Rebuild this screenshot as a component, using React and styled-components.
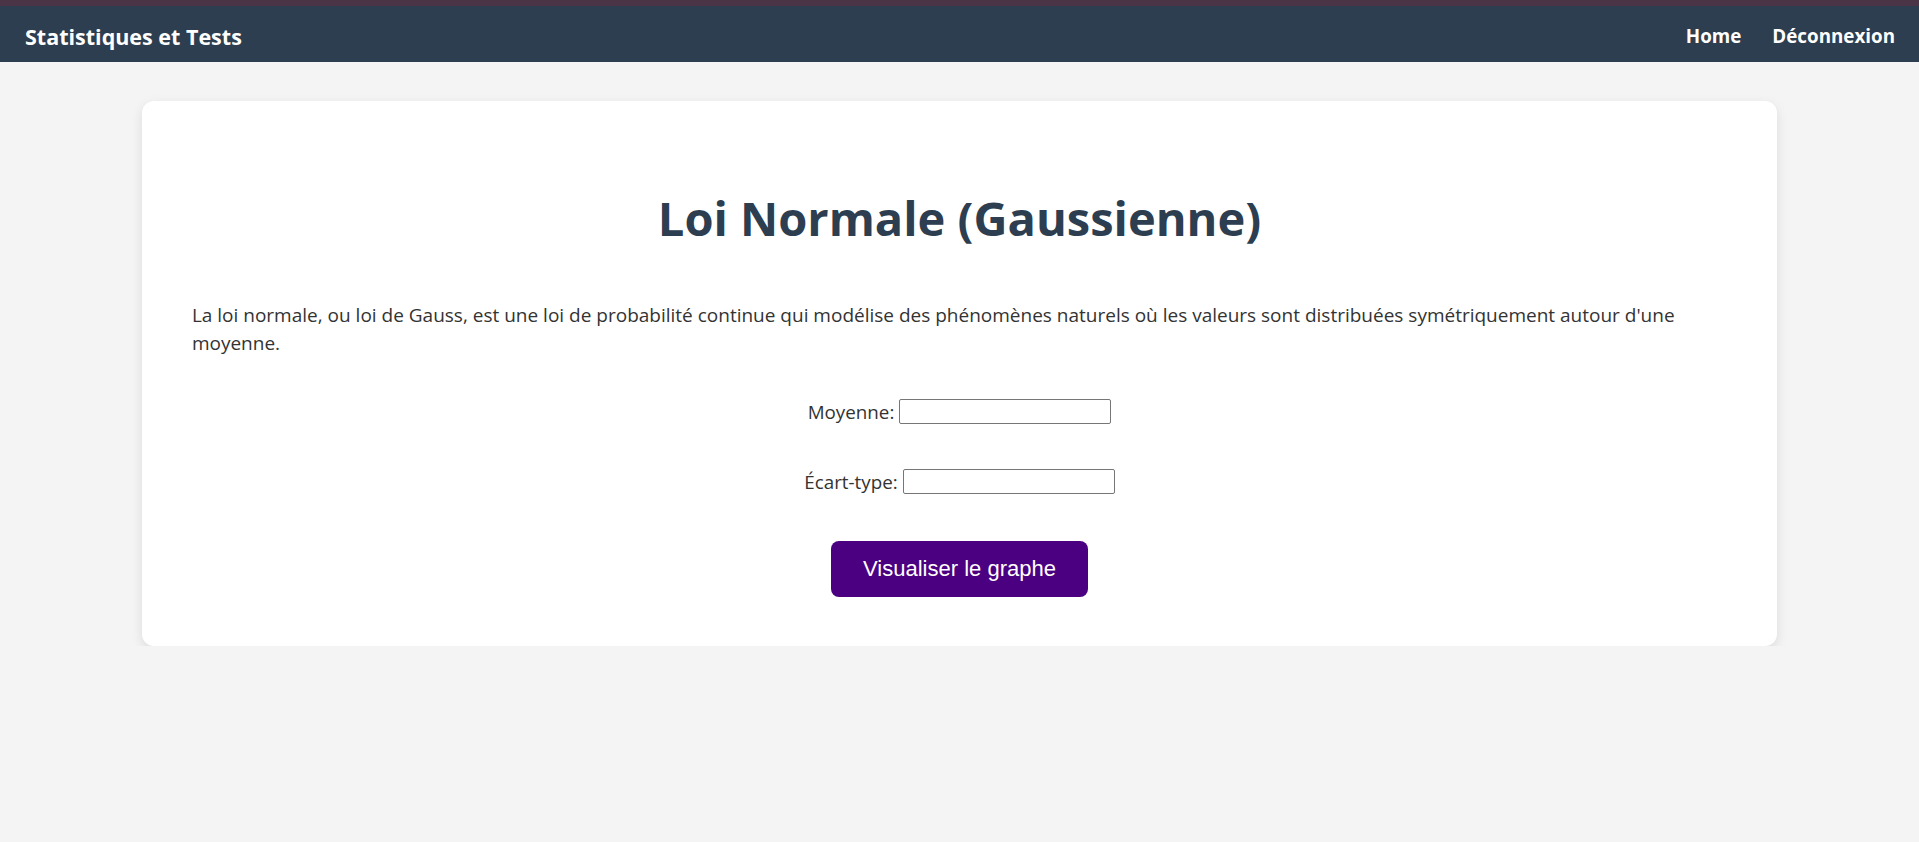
import React from "react";
import styled, { createGlobalStyle } from "styled-components";

const GlobalStyle = createGlobalStyle`
  html, body {
    margin: 0;
    padding: 0;
    background: #f4f4f4;
    font-family: "Open Sans", "Noto Sans", sans-serif;
    color: #333333;
  }
  * { box-sizing: border-box; }
`;

const TopStrip = styled.div`
  height: 6px;
  background: #4b3445;
`;

const NavBar = styled.nav`
  height: 56px;
  background: #2d3e50;
  display: flex;
  align-items: center;
  justify-content: space-between;
  padding: 4px 24px 0 25px;
`;

const Brand = styled.div`
  color: #ffffff;
  font-weight: 700;
  font-size: 21.5px;
`;

const NavLinks = styled.div`
  display: flex;
  align-items: center;
  gap: 31px;
`;

const NavLink = styled.a`
  color: #ffffff;
  font-weight: 700;
  font-size: 18.8px;
  text-decoration: none;
  cursor: pointer;
`;

const Card = styled.main`
  width: 80%;
  margin: 39px auto 0;
  box-sizing: content-box;
  padding: 50px 50px 49px;
  background: #ffffff;
  border-radius: 12px;
  box-shadow: 0 4px 12px rgba(0, 0, 0, 0.1);
`;

const Title = styled.h1`
  margin: 35px 0 51px;
  font-size: 47px;
  line-height: 64px;
  font-weight: 700;
  text-align: center;
  color: #2c3e50;
`;

const Description = styled.p`
  margin: 0;
  font-size: 19px;
  line-height: 28px;
  color: #333333;
`;

const Form = styled.form`
  display: flex;
  flex-direction: column;
  align-items: center;
  margin-top: 42px;
  gap: 45px;
`;

const Field = styled.div`
  display: flex;
  align-items: center;
  gap: 5px;
  height: 25px;
`;

const Label = styled.label`
  font-size: 18.8px;
  color: #333333;
  white-space: nowrap;
`;

const Input = styled.input`
  width: 212px;
  height: 25px;
  border: 1px solid #767676;
  border-radius: 2px;
  background: #ffffff;
  padding: 1px 2px;
  font-size: 16px;
`;

const SubmitButton = styled.button`
  margin-top: 2px;
  background: #4b0082;
  color: #ffffff;
  border: none;
  border-radius: 8px;
  padding: 15px 32px;
  font-family: "Liberation Sans", Arial, sans-serif;
  font-size: 22px;
  line-height: 26px;
  cursor: pointer;
`;

export default function App() {
  return (
    <>
      <GlobalStyle />
      <TopStrip />
      <NavBar>
        <Brand>Statistiques et Tests</Brand>
        <NavLinks>
          <NavLink>Home</NavLink>
          <NavLink>Déconnexion</NavLink>
        </NavLinks>
      </NavBar>
      <Card>
        <Title>Loi Normale (Gaussienne)</Title>
        <Description>
          La loi normale, ou loi de Gauss, est une loi de probabilité continue qui modélise des phénomènes naturels où les valeurs sont distribuées symétriquement autour d'une moyenne.
        </Description>
        <Form onSubmit={(e) => e.preventDefault()}>
          <Field>
            <Label htmlFor="moyenne">Moyenne:</Label>
            <Input id="moyenne" type="text" />
          </Field>
          <Field>
            <Label htmlFor="ecart">Écart-type:</Label>
            <Input id="ecart" type="text" />
          </Field>
          <SubmitButton type="submit">Visualiser le graphe</SubmitButton>
        </Form>
      </Card>
    </>
  );
}
